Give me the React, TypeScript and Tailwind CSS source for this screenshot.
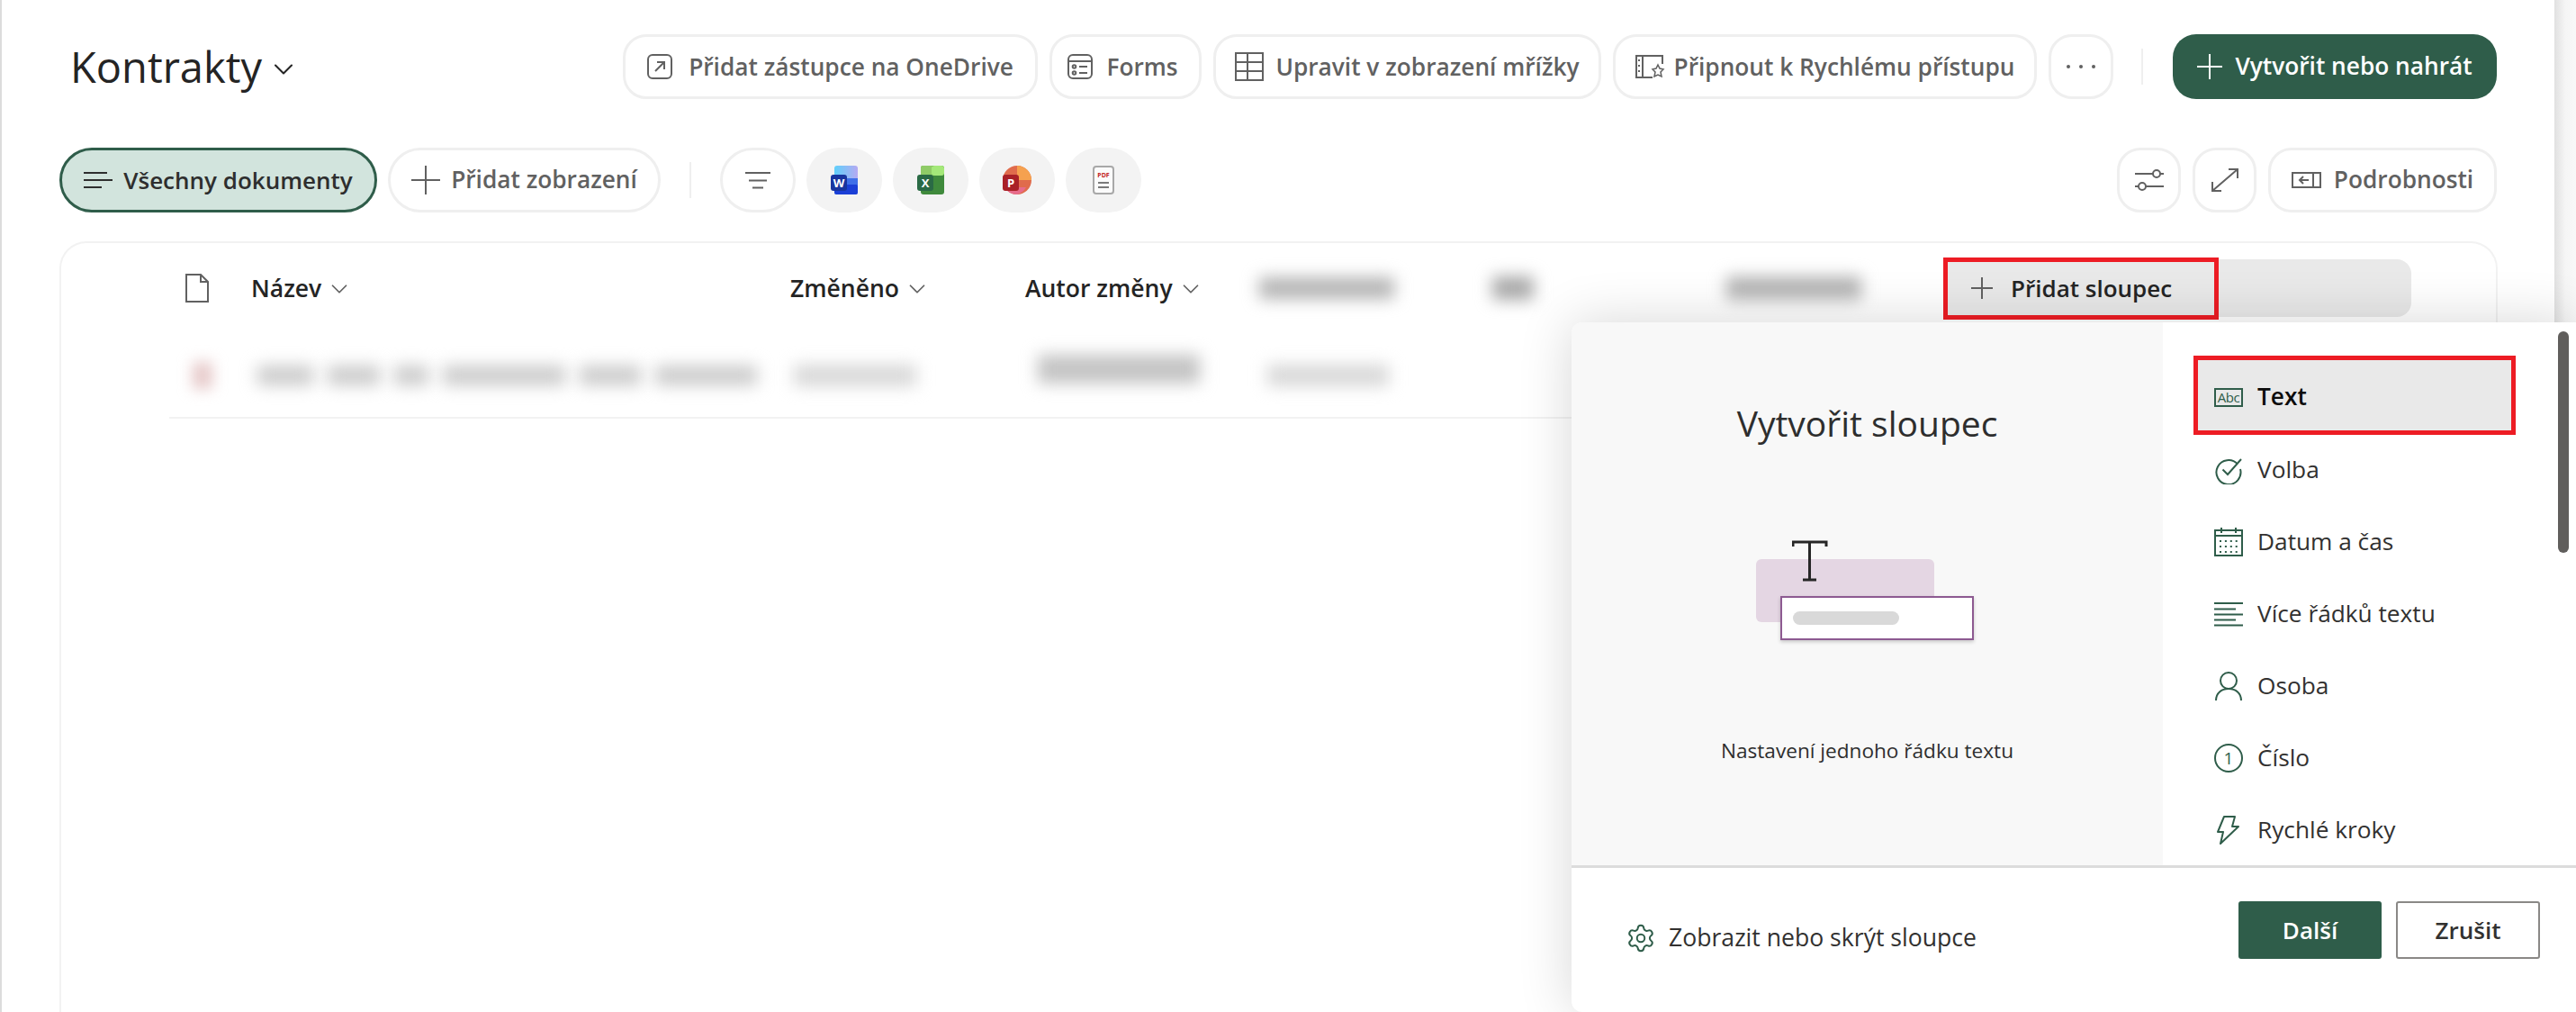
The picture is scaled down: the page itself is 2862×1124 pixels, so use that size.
import { ChevronDown, Settings } from "lucide-react";
import type { ReactNode } from "react";

const Stroke = ({ w, h, children, className = "" }: { w: number; h: number; children: ReactNode; className?: string }) => (
  <svg width={w} height={h} viewBox={`0 0 ${w} ${h}`} fill="none" stroke="currentColor" strokeWidth="2" className={`shrink-0 ${className}`}>
    {children}
  </svg>
);

// top row + toolbar pill
function Pill({ width, children, full }: { width: string; children: ReactNode; full?: boolean }) {
  return (
    <div className={`${width} ${full ? "rounded-[36px]" : "rounded-[26px]"} h-[72px] shrink-0 border-[3px] border-[#efefef] bg-white flex items-center justify-center text-[#616161] text-[26.25px] font-semibold`}>
      {children}
    </div>
  );
}

function AppIcon({ children }: { children: ReactNode }) {
  return <div className="w-[84px] h-[72px] shrink-0 rounded-[36px] bg-[#f3f3f3] flex items-center justify-center">{children}</div>;
}

function HeaderCell({ label }: { label: string }) {
  return (
    <div className="flex items-center gap-[5px] pt-[1px]">
      {label}
      <ChevronDown className="w-[30px] h-[30px] text-[#616161]" strokeWidth={1.4} />
    </div>
  );
}

const listRows = [
  {
    label: "Volba",
    icon: (
      <Stroke w={32} h={32}>
        <path d="M26 9.500A13.500 13.500 0 1 0 29 15" />
        <path d="M9.500 15.500l5.500 5.500L30 4" />
      </Stroke>
    ),
  },
  {
    label: "Datum a čas",
    icon: (
      <Stroke w={32} h={32}>
        <rect x="1" y="3" width="30" height="28" />
        <path d="M1 9h30M8 0v6M24 0v6" />
        <path d="M6 15h20M6 21h20M6 27h20" strokeDasharray="2 3.900" strokeWidth="2.200" />
      </Stroke>
    ),
  },
  {
    label: "Více řádků textu",
    icon: (
      <Stroke w={32} h={28}>
        <path d="M0 2h32M0 8.500h24M0 14.500h32M0 20.500h24M0 26.500h32" />
      </Stroke>
    ),
  },
  {
    label: "Osoba",
    icon: (
      <Stroke w={32} h={32}>
        <circle cx="16" cy="10" r="9" />
        <path d="M2 32c0-8 6-13 14-13s14 5 14 13" />
      </Stroke>
    ),
  },
  {
    label: "Číslo",
    icon: (
      <div className="relative w-[32px] h-[32px] rounded-full border-2 border-[#2f5d4a] flex items-center justify-center text-[19px] leading-none text-[#2f5d4a]">1</div>
    ),
  },
  {
    label: "Rychlé kroky",
    icon: (
      <Stroke w={32} h={32}>
        <path d="M11 1h12l-3 11h7L7 31l3-13H4z" strokeLinejoin="round" />
      </Stroke>
    ),
  },
];

const nameParts = ["w-[62px]", "w-[58px]", "w-[38px]", "w-[136px]", "w-[68px]", "w-[113px]"];

export default function App() {
  return (
    <div className="relative flex w-[2862px] h-[1124px] overflow-hidden bg-white text-[#242424] font-['Open_Sans',sans-serif]">
      <div className="flex-1 border-l-2 border-[#dcdcdc] flex flex-col pt-[38px]">
        {/* Title + commands */}
        <div className="flex items-center h-[72px] pl-[76px]">
          <div className="flex items-center w-[614px]">
            <span className="text-[47px] leading-none text-[#242424]">Kontrakty</span>
            <ChevronDown className="ml-[6px] w-[36px] h-[36px] text-[#242424] mt-[6px]" strokeWidth={1.4} />
          </div>
          <div className="flex items-center gap-[13px] pt-[0px]">
            <Pill width="w-[461px]">
              <Stroke w={28} h={28} className="mr-[18px]">
                <rect x="1" y="1" width="26" height="26" rx="5" />
                <path d="M9 19L19 9M11 9h8v8" />
              </Stroke>
              <span className="pt-[1px]">Přidat zástupce na OneDrive</span>
            </Pill>
            <Pill width="w-[169px]">
              <Stroke w={28} h={28} className="mr-[15px]">
                <rect x="1" y="1" width="26" height="26" rx="5" />
                <path d="M1 8h26M13 14h9M13 21h9" />
                <circle cx="7.500" cy="14" r="1.800" />
                <circle cx="7.500" cy="21" r="1.800" />
              </Stroke>
              <span className="mr-[6px] pt-[2px]">Forms</span>
            </Pill>
            <Pill width="w-[431px]">
              <Stroke w={32} h={32} className="mr-[13px]">
                <rect x="1" y="1" width="30" height="30" />
                <path d="M1 11h30M1 21h30M14 1v30" />
              </Stroke>
              <span className="pt-[1px]">Upravit v zobrazení mřížky</span>
            </Pill>
            <Pill width="w-[471px]">
              <Stroke w={33} h={26} className="mr-[10px]">
                <path d="M30 10V1H1v24h18M8 1v24" />
                <path d="M3 6h2M3 12h2M3 18h2" />
                <path d="M25 11l2 4 4 1-3 3 1 5-4-2-4 2 1-5-3-3 4-1z" strokeWidth="1.500" />
              </Stroke>
              <span className="pt-[1px]">Připnout k Rychlému přístupu</span>
            </Pill>
            <Pill width="w-[72px]">
              <svg width="32" height="4" viewBox="0 0 32 4" fill="#616161">
                <circle cx="2" cy="2" r="2" />
                <circle cx="16" cy="2" r="2" />
                <circle cx="30" cy="2" r="2" />
              </svg>
            </Pill>
          </div>
          <div className="w-[2px] h-[40px] bg-[#efefef] ml-[31px] mr-[33px]" />
          <div className="w-[360px] h-[72px] rounded-[26px] bg-[#2f5d4a] flex items-center justify-center text-white text-[26.25px] font-semibold">
            <Stroke w={28} h={28} className="mr-[14px]">
              <path d="M14 0v28M0 14h28" />
            </Stroke>
            Vytvořit nebo nahrát
          </div>
        </div>

        {/* Views toolbar */}
        <div className="flex items-center h-[72px] mt-[54px] pl-[64px] pr-[64px]">
          <div className="w-[353px] h-[72px] rounded-[36px] border-[3px] border-[#2f5d4a] bg-[#d2e4dd] flex items-center justify-center text-[26px] font-semibold text-[#2e2e2e]">
            <Stroke w={32} h={18} className="mr-[12px]">
              <path d="M0 1h26M0 9h32M0 17h20" />
            </Stroke>
            Všechny dokumenty
          </div>
          <div className="ml-[12px]">
            <Pill width="w-[303px]" full>
              <Stroke w={32} h={32} className="mr-[12px]">
                <path d="M16 0v32M0 16h32" />
              </Stroke>
              <span>Přidat zobrazení</span>
            </Pill>
          </div>
          <div className="w-[2px] h-[40px] bg-[#efefef] ml-[32px] mr-[32px]" />
          <div className="flex items-center gap-[12px]">
            <Pill width="w-[84px]" full>
              <Stroke w={28} h={20}>
                <path d="M0 2h28M4 10.500h20M8 18.500h12" />
              </Stroke>
            </Pill>
            <AppIcon>
              <svg width="30" height="32" viewBox="0 0 30 32">
                <defs>
                  <linearGradient id="wordTop" x1="0" y1="0" x2="1" y2="0">
                    <stop offset="0" stopColor="#5fd0fb" />
                    <stop offset="1" stopColor="#b5a9f2" />
                  </linearGradient>
                </defs>
                <rect x="4" y="0" width="26" height="32" rx="3" fill="url(#wordTop)" />
                <rect x="4" y="14" width="26" height="9" fill="#3f6fe8" />
                <rect x="4" y="21" width="26" height="11" rx="2" fill="#1b3fd6" />
                <rect x="0" y="10" width="18" height="18" rx="3" fill="#18359f" />
                <text x="9" y="24" textAnchor="middle" fontSize="13" fontWeight="700" fill="#fff" fontFamily="Open Sans">W</text>
              </svg>
            </AppIcon>
            <AppIcon>
              <svg width="30" height="32" viewBox="0 0 30 32">
                <rect x="4" y="0" width="26" height="32" rx="3" fill="#3f8a3c" />
                <rect x="4" y="0" width="14" height="12" rx="2" fill="#8fcb67" />
                <rect x="16" y="0" width="14" height="11" rx="3" fill="#a4e879" />
                <rect x="0" y="10" width="18" height="18" rx="3" fill="#2a6a45" />
                <text x="9" y="24" textAnchor="middle" fontSize="13" fontWeight="700" fill="#fff" fontFamily="Open Sans">X</text>
              </svg>
            </AppIcon>
            <AppIcon>
              <svg width="32" height="32" viewBox="0 0 32 32">
                <circle cx="16" cy="16" r="16" fill="#e06b4c" />
                <path d="M16 0a16 16 0 0 1 16 16H16z" fill="#f5a14f" />
                <path d="M16 32a16 16 0 0 1-14-8h24a16 16 0 0 1-10 8z" fill="#e76b8b" />
                <rect x="0" y="10" width="18" height="18" rx="3" fill="#a92027" />
                <text x="9" y="24" textAnchor="middle" fontSize="13" fontWeight="700" fill="#fff" fontFamily="Open Sans">P</text>
              </svg>
            </AppIcon>
            <AppIcon>
              <svg width="24" height="32" viewBox="0 0 24 32" fill="none">
                <rect x="1" y="1" width="22" height="30" rx="3" stroke="#a8a8a8" strokeWidth="2" fill="#fbfbfb" />
                <text x="12" y="13" textAnchor="middle" fontSize="7" fontWeight="700" fill="#c21d1d" fontFamily="Open Sans">PDF</text>
                <path d="M6 19h12M6 24h12" stroke="#7a7a7a" strokeWidth="2" />
              </svg>
            </AppIcon>
          </div>
          <div className="ml-auto flex items-center gap-[13px]">
            <Pill width="w-[71px]">
              <Stroke w={32} h={26}>
                <path d="M0 6h20M28 6h4M0 20h4M12 20h20" />
                <circle cx="24" cy="6" r="4" />
                <circle cx="8" cy="20" r="4" />
              </Stroke>
            </Pill>
            <Pill width="w-[71px]">
              <Stroke w={32} h={28}>
                <path d="M2 26L30 2M20 2h10v10M2 16v10h10" />
              </Stroke>
            </Pill>
            <Pill width="w-[254px]">
              <Stroke w={33} h={18} className="mr-[14px]">
                <rect x="1" y="1" width="31" height="16" />
                <path d="M24 1v16M19 9h-9M13 5L9 9l4 4" />
              </Stroke>
              <span>Podrobnosti</span>
            </Pill>
          </div>
        </div>

        {/* Library card */}
        <div className="ml-[64px] mt-[32px] w-[2709px] flex-1 rounded-t-[30px] border-2 border-b-0 border-[#f2f2f2] flex flex-col">
          <div className="grid grid-cols-[73px_599px_261px_260px_259px_260px_241px_auto] items-center h-[100px] pl-[138px] text-[26.5px] font-semibold">
            <Stroke w={26} h={32} className="text-[#616161]">
              <path d="M1 1h16l8 8v22H1z" />
              <path d="M17 1v8h8" />
            </Stroke>
            <HeaderCell label="Název" />
            <HeaderCell label="Změněno" />
            <HeaderCell label="Autor změny" />
            <div className="w-[150px] h-[24px] bg-[#b4b4b4] blur-[9px]" />
            <div className="w-[46px] h-[26px] bg-[#a8a8a8] blur-[9px]" />
            <div className="w-[150px] h-[26px] bg-[#b4b4b4] blur-[9px]" />
            <div className="relative w-[520px] h-[64px] bg-[#e9e9e9] rounded-r-[16px] flex items-center pl-[31px] text-[26px]">
              <Stroke w={24} h={24} className="mr-[20px] text-[#616161]">
                <path d="M12 0v24M0 12h24" />
              </Stroke>
              Přidat sloupec
              <div className="absolute left-0 top-[-2px] w-[306px] h-[69px] border-[5px] border-[#ed1c24]" />
            </div>
          </div>
          <div className="ml-[120px] h-[95px] border-b-2 border-[#f2f2f2] grid grid-cols-[72px_596px_271px_255px_auto] items-center pl-[26px]">
            <div className="w-[22px] h-[30px] bg-[#e6c9c9] blur-[8px]" />
            <div className="flex gap-[16px]">
              {nameParts.map((w) => (
                <div key={w} className={`${w} h-[22px] bg-[#cbcbcb] blur-[9px]`} />
              ))}
            </div>
            <div className="w-[136px] h-[24px] bg-[#d8d8d8] blur-[9px]" />
            <div className="w-[180px] h-[32px] mb-[14px] bg-[#c4c4c4] blur-[9px]" />
            <div className="w-[135px] h-[24px] bg-[#d8d8d8] blur-[9px]" />
          </div>
        </div>
      </div>
      <div className="w-[24px] bg-linear-to-r from-[#e0e0e0] via-[#f5f5f5] to-[#f8f8f8]" />

      {/* Create column panel */}
      <div className="absolute left-[1746px] top-[358px] right-0 bottom-0 rounded-tl-[12px] rounded-bl-[12px] bg-white shadow-[0_0_60px_rgba(0,0,0,0.16)] flex flex-col overflow-hidden">
        <div className="flex h-[603px]">
          <div className="w-[657px] bg-[#f8f8f8] flex flex-col items-center pt-[84px]">
            <div className="text-[39px] leading-[56px] text-[#2e2e2e] font-medium">Vytvořit sloupec</div>
            <div className="relative w-[242px] h-[112px] mt-[102px] mr-[5px]">
              <svg width="40" height="46" viewBox="0 0 40 46" fill="none" stroke="#262626" strokeWidth="3" className="absolute left-[40px] top-0 z-10">
                <path d="M1 7V2h37v5M19.500 2v42M12 44h15" />
              </svg>
              <div className="absolute left-0 top-[21px] w-[198px] h-[70px] rounded-[6px] bg-[#e4d6e3]" />
              <div className="absolute left-[27px] top-[62px] w-[215px] h-[49px] bg-white border-[2.5px] border-[#8d5a91] shadow-[0_2px_4px_rgba(0,0,0,0.2)] flex items-center pl-[12px]">
                <div className="w-[118px] h-[15px] rounded-full bg-[#d9d9d9]" />
              </div>
            </div>
            <div className="mt-[106px] text-[22.6px] leading-[32px] text-[#2e2e2e]">Nastavení jednoho řádku textu</div>
          </div>
          <div className="flex-1 relative pl-[39px] pt-[42px] text-[#323130] text-[26.25px]">
            <div className="w-[348px] h-[78px] mb-[4px] pt-[4px] bg-[#e9e9e9] outline-[5px] outline-[#ed1c24] flex items-center pl-[18px] gap-[16px] text-[#0c0c0c] font-semibold">
              <div className="w-[32px] h-[21px] shrink-0 border-2 border-[#2f5d4a] text-[15px] leading-[17px] text-center font-normal text-[#2f5d4a] tracking-[-0.5px]">Abc</div>
              Text
            </div>
            {listRows.map((row) => (
              <div key={row.label} className="w-[348px] h-[80px] flex items-center pl-[18px] gap-[16px]">
                <div className="w-[32px] flex justify-center text-[#2f5d4a]">{row.icon}</div>
                {row.label}
              </div>
            ))}
            <div className="absolute right-[8px] top-[10px] w-[12px] h-[246px] rounded-full bg-[#605e5c]" />
          </div>
        </div>
        <div className="flex-1 border-t-[3px] border-[#dcdcdc] flex items-center pl-[60px] pr-[40px] pb-[22px]">
          <Settings className="w-[34px] h-[34px] text-[#2f5d4a] mt-[18px]" strokeWidth={1.4} />
          <span className="ml-[14px] mt-[18px] text-[26.6px] text-[#323130]">Zobrazit nebo skrýt sloupce</span>
          <div className="ml-auto w-[159px] h-[64px] rounded-[3px] bg-[#2f5d4a] text-white font-semibold text-[26px] flex items-center justify-center">Další</div>
          <div className="ml-[16px] w-[160px] h-[64px] rounded-[3px] border-2 border-[#8a8886] bg-white text-[#323130] font-semibold text-[26px] flex items-center justify-center">Zrušit</div>
        </div>
      </div>
    </div>
  );
}
